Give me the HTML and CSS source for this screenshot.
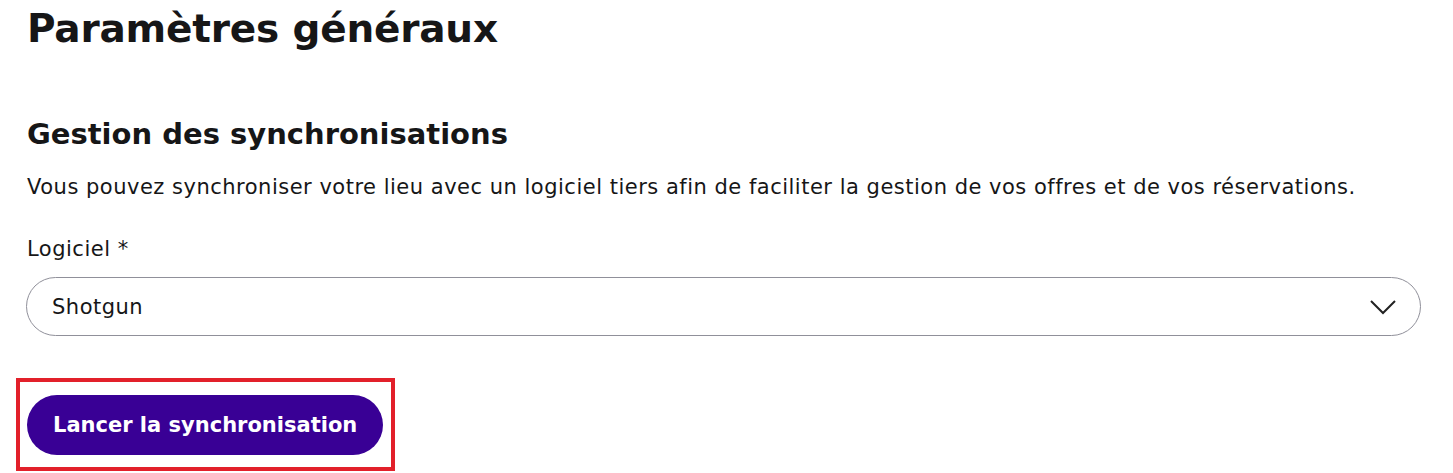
FILE: index.html
```html
<!DOCTYPE html>
<html lang="fr">
<head>
    <meta charset="UTF-8">
    <meta name="viewport" content="width=device-width, initial-scale=1.0">
    <title>Paramètres généraux</title>
    <link rel="stylesheet" href="styles.css">
</head>
<body>
    <div class="page">
        <h1 class="title">Paramètres généraux</h1>

        <section class="sync">
            <h2 class="sync-title">Gestion des synchronisations</h2>
            <p class="sync-desc">Vous pouvez synchroniser votre lieu avec un logiciel tiers afin de faciliter la gestion de vos offres et de vos réservations.</p>

            <label class="field-label" for="software">Logiciel *</label>
            <div class="select">
                <select id="software" name="software">
                    <option>Shotgun</option>
                </select>
                <svg class="select-arrow" width="28" height="16" viewBox="0 0 28 16">
                    <path d="M2 2 L14 14 L26 2" fill="none" stroke="#222" stroke-width="2"/>
                </svg>
            </div>

            <div class="highlight">
                <button type="button" class="btn-primary">Lancer la synchronisation</button>
            </div>
        </section>
    </div>
</body>
</html>
```
FILE: styles.css
```css
* {
    margin: 0;
    padding: 0;
    box-sizing: border-box;
}

body {
    background-color: #fff;
    color: #161617;
    font-family: "DejaVu Sans", "Open Sans", sans-serif;
}

.page {
    padding: 0 32px 0 27px;
}

.title {
    font-size: 39px;
    font-weight: bold;
    line-height: 58px;
    letter-spacing: -0.2px;
}

.sync {
    margin-top: 55px;
}

.sync-title {
    font-size: 29px;
    font-weight: bold;
    line-height: 42px;
}

.sync-desc {
    margin-top: 17px;
    font-size: 21px;
    line-height: 30px;
    letter-spacing: 0.5px;
}

.field-label {
    display: block;
    margin-top: 32px;
    font-size: 21px;
    line-height: 30px;
    letter-spacing: 0.5px;
}

.select {
    position: relative;
    margin-top: 13px;
    width: 1395px;
    margin-left: -1px;
}

.select select {
    appearance: none;
    width: 100%;
    height: 59px;
    border: 1px solid #90909a;
    border-radius: 30px;
    background: #fff;
    padding: 0 60px 0 25px;
    font-family: inherit;
    font-size: 21px;
    color: #161617;
    letter-spacing: 0.5px;
}

.select-arrow {
    position: absolute;
    right: 24px;
    top: 22px;
    pointer-events: none;
}

.highlight {
    display: inline-block;
    margin-top: 42px;
    margin-left: -11px;
    border: 4px solid #e2202a;
    padding: 13px 8px 12px 7px;
}

.btn-primary {
    height: 60px;
    padding: 0 26px;
    border: none;
    border-radius: 30px;
    background-color: #390095;
    color: #fff;
    font-family: inherit;
    font-size: 21px;
    font-weight: bold;
}
```
